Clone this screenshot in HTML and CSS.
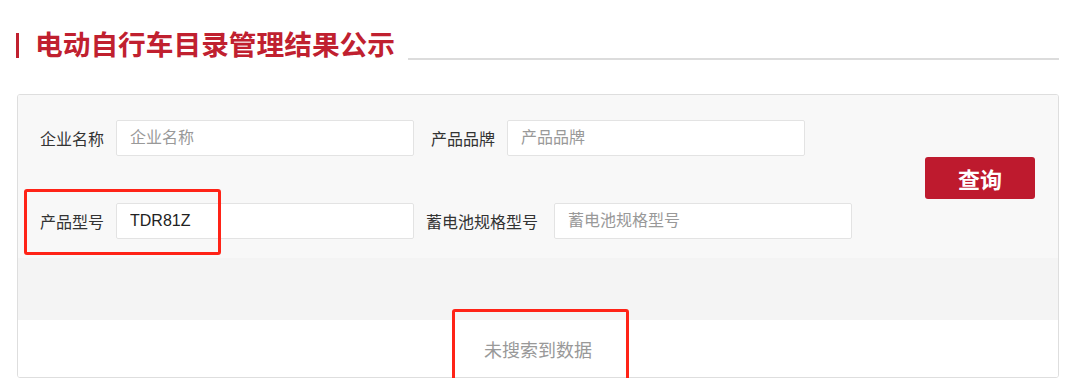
FILE: index.html
```html
<!DOCTYPE html>
<html lang="zh-CN">
<head>
    <meta charset="UTF-8">
    <meta name="viewport" content="width=device-width, initial-scale=1.0">
    <title>电动自行车目录管理结果公示</title>
    <link rel="stylesheet" href="styles.css">
</head>
<body>
    <div class="page">
        <!-- 标题 -->
        <div class="page-head">
            <h1>电动自行车目录管理结果公示</h1>
            <div class="head-line"></div>
        </div>

        <!-- 查询卡片 -->
        <div class="card">
            <div class="search-form">
                <div class="fields">
                    <div class="form-row">
                        <div class="field">
                            <label>企业名称</label>
                            <input type="text" placeholder="企业名称">
                        </div>
                        <div class="field">
                            <label>产品品牌</label>
                            <input type="text" placeholder="产品品牌">
                        </div>
                    </div>
                    <div class="form-row form-row-wide">
                        <div class="field">
                            <label>产品型号</label>
                            <input type="text" placeholder="产品型号" value="TDR81Z">
                        </div>
                        <div class="field field-wide">
                            <label>蓄电池规格型号</label>
                            <input type="text" placeholder="蓄电池规格型号">
                        </div>
                    </div>
                </div>
                <button class="search-btn">查询</button>
            </div>

            <div class="result-head"></div>
            <div class="result-empty">未搜索到数据</div>
        </div>

        <!-- 红框标注 -->
        <div class="mark mark-model"></div>
        <div class="mark mark-empty"></div>
    </div>
</body>
</html>
```

FILE: styles.css
```css
/* 页面基础 */
body {
    margin: 0;
    padding: 0;
    background: #fff;
    color: #333;
    font-family: "Liberation Sans", "Noto Sans CJK SC", sans-serif;
}

.page {
    position: relative;
    padding: 33px 21px 0 16px;
}

/* 标题 */
.page-head {
    display: flex;
    align-items: flex-end;
}

.page-head h1 {
    margin: 0;
    height: 25px;
    line-height: 26px;
    padding-left: 16px;
    border-left: 3px solid #c0202f;
    font-size: 27.7px;
    font-weight: bold;
    color: #c0202f;
    white-space: nowrap;
}

.head-line {
    flex: 1;
    margin-left: 13px;
    margin-bottom: -2px;
    border-bottom: 2px solid #dcdcdc;
}

/* 卡片 */
.card {
    margin: 36px 0 0 1px;
    border: 1px solid #dedede;
    border-radius: 3px;
    overflow: hidden;
}

.search-form {
    display: flex;
    align-items: center;
    padding: 25px 23px 19px 22px;
    background: #f8f8f8;
}

.fields {
    display: flex;
    flex-direction: column;
    gap: 47px;
}

.form-row {
    display: flex;
    gap: 17px;
}

.form-row-wide {
    gap: 12px;
}

.field {
    display: flex;
    align-items: center;
}

.field label {
    margin-right: 12px;
    font-size: 16px;
    color: #333;
    white-space: nowrap;
}

.field-wide label {
    margin-right: 16px;
}

.field input {
    box-sizing: border-box;
    width: 298px;
    height: 36px;
    padding: 0 13px;
    border: 1px solid #e3e3e3;
    border-radius: 2px;
    background: #fff;
    font-family: inherit;
    font-size: 16px;
    color: #222;
    outline: none;
}

.field input::placeholder {
    color: #999;
}

.search-btn {
    margin: 0 0 3px auto;
    width: 110px;
    height: 42px;
    border: none;
    border-radius: 3px;
    background: #be1a2e;
    color: #fff;
    font-family: inherit;
    font-size: 22px;
    font-weight: bold;
    cursor: pointer;
}

/* 结果区 */
.result-head {
    height: 62px;
    background: #f4f4f4;
}

.result-empty {
    height: 57px;
    line-height: 63px;
    text-align: center;
    font-size: 18px;
    color: #999;
    background: #fff;
}

/* 红框标注 */
.mark {
    position: absolute;
    box-sizing: border-box;
    border: 3px solid #ff2317;
    border-radius: 3px;
}

.mark-model {
    left: 24px;
    top: 189px;
    width: 197px;
    height: 66px;
}

.mark-empty {
    left: 452px;
    top: 309px;
    width: 177px;
    height: 74px;
}
```
